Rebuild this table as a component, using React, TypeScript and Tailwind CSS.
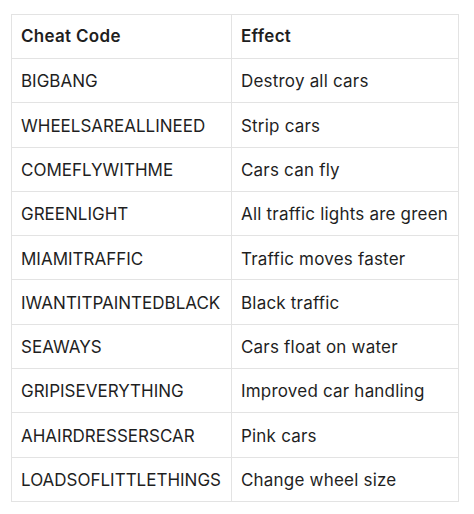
const rows: Array<[string, string]> = [
  ['BIGBANG', 'Destroy all cars'],
  ['WHEELSAREALLINEED', 'Strip cars'],
  ['COMEFLYWITHME', 'Cars can fly'],
  ['GREENLIGHT', 'All traffic lights are green'],
  ['MIAMITRAFFIC', 'Traffic moves faster'],
  ['IWANTITPAINTEDBLACK', 'Black traffic'],
  ['SEAWAYS', 'Cars float on water'],
  ['GRIPISEVERYTHING', 'Improved car handling'],
  ['AHAIRDRESSERSCAR', 'Pink cars'],
  ['LOADSOFLITTLETHINGS', 'Change wheel size'],
]

export default function App() {
  return (
    <div className="w-[474px] h-[514px] bg-white pl-[11px] pt-[14px] font-['Inter',sans-serif] text-[#1f1f1f]">
      <table className="w-[448px] border-collapse text-[17px]">
        <thead>
          <tr className="h-[44px]">
            <th className="w-[220px] border border-[#e3e3e3] px-[9px] pt-[1px] text-left font-semibold tracking-[0.3px]">
              Cheat Code
            </th>
            <th className="border border-[#e3e3e3] px-[9px] pt-[1px] text-left font-semibold tracking-[0.3px]">
              Effect
            </th>
          </tr>
        </thead>
        <tbody>
          {rows.map(([code, effect]) => (
            <tr key={code} className="h-[44.3px]">
              <td className="border border-[#e3e3e3] px-[9px] pt-[3px]">{code}</td>
              <td className="border border-[#e3e3e3] px-[9px] pt-[3px] tracking-[0.2px]">{effect}</td>
            </tr>
          ))}
        </tbody>
      </table>
    </div>
  )
}
